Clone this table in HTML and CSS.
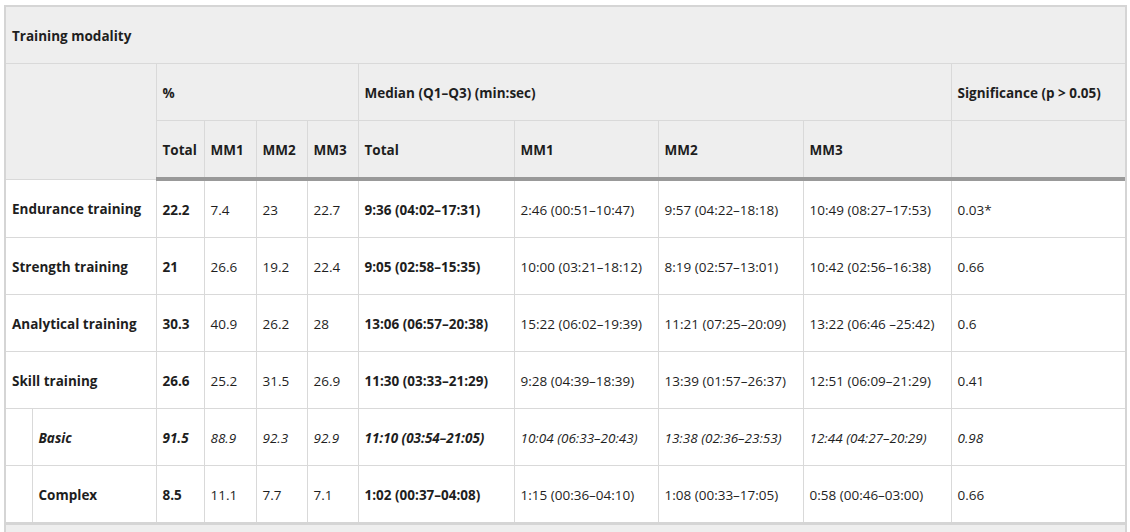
FILE: index.html
```html
<!DOCTYPE html>
<html>
<head>
<meta charset="utf-8">
<link rel="stylesheet" href="styles.css">
</head>
<body>
<div class="wrap">
<table class="tbl">
<colgroup>
<col class="c-ind"><col class="c-lab"><col class="c-p1"><col class="c-p2"><col class="c-p3"><col class="c-p4"><col class="c-m1"><col class="c-m2"><col class="c-m3"><col class="c-m4"><col class="c-sig">
</colgroup>
<thead>
<tr><th colspan="11">Training modality</th></tr>
<tr><th colspan="2" rowspan="2"></th><th colspan="4">%</th><th colspan="4">Median (Q1–Q3) (min:sec)</th><th>Significance (p &gt; 0.05)</th></tr>
<tr class="last-head"><th>Total</th><th>MM1</th><th>MM2</th><th>MM3</th><th>Total</th><th>MM1</th><th>MM2</th><th>MM3</th><th></th></tr>
</thead>
<tbody>
<tr><td colspan="2" class="b">Endurance training</td><td class="b">22.2</td><td>7.4</td><td>23</td><td>22.7</td><td class="b">9:36 (04:02–17:31)</td><td>2:46 (00:51–10:47)</td><td>9:57 (04:22–18:18)</td><td>10:49 (08:27–17:53)</td><td>0.03*</td></tr>
<tr><td colspan="2" class="b">Strength training</td><td class="b">21</td><td>26.6</td><td>19.2</td><td>22.4</td><td class="b">9:05 (02:58–15:35)</td><td>10:00 (03:21–18:12)</td><td>8:19 (02:57–13:01)</td><td>10:42 (02:56–16:38)</td><td>0.66</td></tr>
<tr><td colspan="2" class="b">Analytical training</td><td class="b">30.3</td><td>40.9</td><td>26.2</td><td>28</td><td class="b">13:06 (06:57–20:38)</td><td>15:22 (06:02–19:39)</td><td>11:21 (07:25–20:09)</td><td>13:22 (06:46 –25:42)</td><td>0.6</td></tr>
<tr><td colspan="2" class="b">Skill training</td><td class="b">26.6</td><td>25.2</td><td>31.5</td><td>26.9</td><td class="b">11:30 (03:33–21:29)</td><td>9:28 (04:39–18:39)</td><td>13:39 (01:57–26:37)</td><td>12:51 (06:09–21:29)</td><td>0.41</td></tr>
<tr class="it"><td></td><td class="b">Basic</td><td class="b">91.5</td><td>88.9</td><td>92.3</td><td>92.9</td><td class="b">11:10 (03:54–21:05)</td><td>10:04 (06:33–20:43)</td><td>13:38 (02:36–23:53)</td><td>12:44 (04:27–20:29)</td><td>0.98</td></tr>
<tr><td></td><td class="b">Complex</td><td class="b">8.5</td><td>11.1</td><td>7.7</td><td>7.1</td><td class="b">1:02 (00:37–04:08)</td><td>1:15 (00:36–04:10)</td><td>1:08 (00:33–17:05)</td><td>0:58 (00:46–03:00)</td><td>0.66</td></tr>
</tbody>
</table>
</div>
</body>
</html>
```
FILE: styles.css
```css
html, body {
  margin: 0;
  padding: 0;
  background: #fff;
}
.wrap {
  margin: 5px 0 0 4px;
  width: 1119px;
  border: 2px solid #d5d5d5;
  border-bottom: none;
  background: #eeeeee;
  height: 525px;
  font-family: "Segoe UI", "Open Sans", sans-serif;
  font-size: 13.5px;
  color: #1e1e1e;
}
.tbl {
  width: 1119px;
  border-collapse: collapse;
  table-layout: fixed;
  border-bottom: 3px solid #d5d5d5;
}
.c-ind { width: 26px; }
.c-lab { width: 124px; }
.c-p1 { width: 48px; }
.c-p2 { width: 52px; }
.c-p3 { width: 51px; }
.c-p4 { width: 51px; }
.c-m1 { width: 156px; }
.c-m2 { width: 144px; }
.c-m3 { width: 145px; }
.c-m4 { width: 148px; }
.c-sig { width: 174px; }
.tbl th, .tbl td {
  text-align: left;
  vertical-align: middle;
  padding: 2px 6px 0;
  height: 54px;
  border: 1px solid #d9d9d9;
  white-space: nowrap;
}
.tbl tr > :first-child { border-left: none; }
.tbl tr > :last-child { border-right: none; }
.tbl thead tr:first-child th { border-top: none; }
.tbl th {
  background: #eeeeee;
  font-weight: 700;
}
.tbl td {
  background: #fff;
  font-weight: 400;
}
.tbl .last-head th {
  border-bottom: 4px solid #999;
}
.tbl td.b { font-weight: 700; }
.tbl tr.it td { font-style: italic; }
```
